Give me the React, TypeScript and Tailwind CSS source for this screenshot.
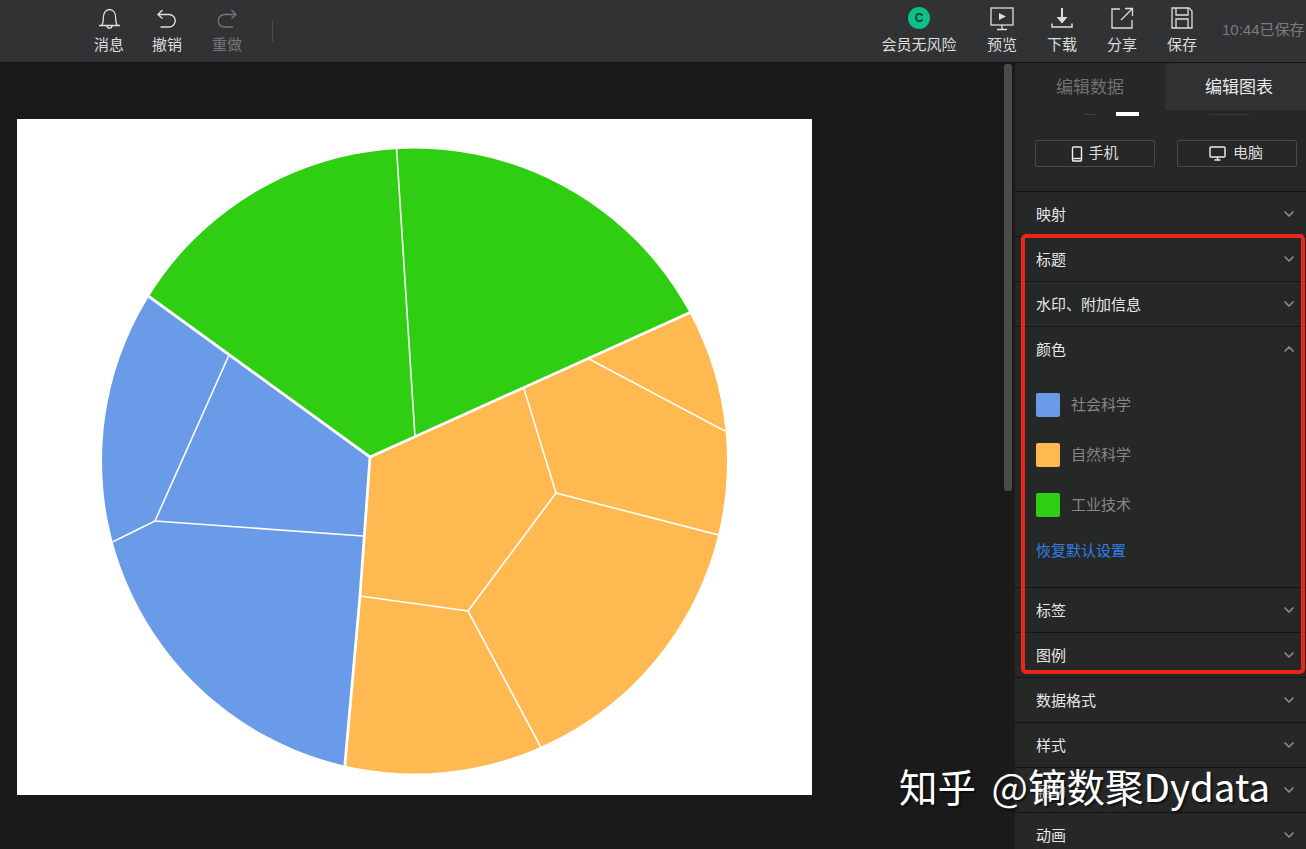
import { ChevronDown, ChevronUp } from "lucide-react";

const font = { fontFamily: '"Liberation Sans", "Noto Sans CJK SC", sans-serif' };

function Bell() {
  return (
    <svg width="24" height="24" viewBox="0 0 24 24" fill="none" stroke="currentColor" strokeWidth="1.3">
      <path d="M2 18.500h21M4.500 18.500c1.500-1.800 1.800-3.500 1.800-7.500C6.300 5.800 8.800 2.500 12.500 2.500s6.200 3.300 6.200 8.500c0 4 .3 5.700 1.800 7.500" />
      <path d="M10 18.500c0 1.700 1 2.700 2.500 2.700s2.500-1 2.500-2.700" />
    </svg>
  );
}

function Undo() {
  return (
    <svg width="24" height="24" viewBox="0 0 24 24" fill="none" stroke="currentColor" strokeWidth="1.4">
      <path d="M3 7.500h11a6.250 6.250 0 0 1 0 12.500H5.500" />
      <path d="M7.500 3 3 7.500l4.500 4" />
    </svg>
  );
}

function Redo() {
  return (
    <svg width="24" height="24" viewBox="0 0 24 24" fill="none" stroke="currentColor" strokeWidth="1.4">
      <path d="M21 7.500H9.500a6.250 6.250 0 0 0 0 12.500H18" />
      <path d="M16.500 3l4.500 4.500-4.500 4" />
    </svg>
  );
}

function Preview() {
  return (
    <svg width="24" height="24" viewBox="0 0 24 24" fill="none" stroke="currentColor" strokeWidth="1.3">
      <rect x="1" y="1" width="22" height="17" />
      <path d="M12 18v4M7 22.500h10" />
      <path d="M9 6l7 3.500-7 3.500z" fill="currentColor" stroke="none" />
    </svg>
  );
}

function Download() {
  return (
    <svg width="24" height="24" viewBox="0 0 24 24" fill="none" stroke="currentColor" strokeWidth="1.5">
      <path d="M12 1v10" strokeWidth="2" />
      <path d="M6.500 10h11L12 16.500z" fill="currentColor" stroke="none" />
      <path d="M2 16.500v3.500h20v-3.500" />
    </svg>
  );
}

function Share() {
  return (
    <svg width="24" height="24" viewBox="0 0 24 24" fill="none" stroke="currentColor" strokeWidth="1.3">
      <path d="M10 2H2v19h20v-8" />
      <path d="M11 13 22 2M15 1.500h7.500V9" />
    </svg>
  );
}

function Save() {
  return (
    <svg width="24" height="24" viewBox="0 0 24 24" fill="none" stroke="currentColor" strokeWidth="1.3">
      <path d="M2 1h17l3 3v17H2z" />
      <path d="M6 1v7h12V1M6 21v-9h12v9" />
    </svg>
  );
}

function ToolItem({ icon, label, dim, className }: { icon: React.ReactNode; label: string; dim?: boolean; className: string }) {
  return (
    <div className={`flex flex-col items-center ${className} ${dim ? "text-[#757678]" : "text-[#dcdddd]"}`}>
      <div className="h-[24px] w-[24px]">{icon}</div>
      <span className="mt-[4px] text-[15px] leading-[20px]">{label}</span>
    </div>
  );
}

function Row({ label, open }: { label: string; open?: boolean }) {
  const Icon = open ? ChevronUp : ChevronDown;
  return (
    <div className={`flex h-[45px] items-center justify-between border-b pl-[21px] pr-[9px] text-[15px] text-[#e6e6e6] ${open ? "border-transparent" : "border-[#151515]"}`}>
      <span className="pt-[2px]">{label}</span>
      <Icon className="h-[16px] w-[16px] text-[#8b8c8d]" strokeWidth={2.5} />
    </div>
  );
}

function Legend({ color, label }: { color: string; label: string }) {
  return (
    <div className="flex h-[50px] items-center">
      <div className={`h-[24px] w-[24px] rounded-[2px] ${color}`} />
      <span className="ml-[11px] text-[15px] text-[#868687]">{label}</span>
    </div>
  );
}

function Chart() {
  return (
    <svg className="block h-[676px] w-[795px] bg-white" viewBox="17 119 795 676">
      <defs>
        <clipPath id="disc">
          <circle cx="414.500" cy="461" r="312.500" />
        </clipPath>
      </defs>
      <g clipPath="url(#disc)" strokeLinecap="round">
        <polygon points="370,457 37,215 37,-100 1010,-100 1010,169" fill="#2fce12" />
        <polygon points="370,457 37,215 37,900 333,900 360,596" fill="#6a9be8" />
        <polygon points="370,457 1010,169 1010,900 333,900 360,596" fill="#ffb950" />
        <g stroke="#ffffff" strokeWidth="1.600" fill="none">
          <path d="M396 140 415 437" />
          <path d="M229 355 155 521M155 521 100 548M155 521 363 536" />
          <path d="M524 389 556 493M589 359 740 439M556 493 730 538M556 493 468 611M468 611 360 596M468 611 545 755" />
        </g>
        <g stroke="#ffffff" strokeWidth="2.800" fill="none">
          <path d="M370 457 140 290M370 457 700 308M370 457 360 596 344 775" />
        </g>
      </g>
    </svg>
  );
}

export default function App() {
  return (
    <div className="relative flex h-[849px] w-[1306px] flex-col overflow-hidden bg-[#1a1a1a]" style={font}>
      <header className="flex h-[63px] shrink-0 items-start border-b border-[#141414] bg-[#313234] pt-[7px]">
        <ToolItem icon={<Bell />} label="消息" className="ml-[94px] w-[30px]" />
        <ToolItem icon={<Undo />} label="撤销" className="ml-[28px] w-[30px]" />
        <ToolItem icon={<Redo />} label="重做" dim className="ml-[30px] w-[30px]" />
        <div className="ml-[30px] mt-[13px] h-[22px] w-px bg-[#4a4b4d]" />
        <div className="ml-[608px] flex w-[76px] flex-col items-center text-[#dcdddd]">
          <div className="h-[24px]">
            <div className="flex h-[22px] w-[22px] items-center justify-center rounded-full bg-[#0dbf86] text-[12px] font-bold text-[#1c3a30]">C</div>
          </div>
          <span className="mt-[4px] whitespace-nowrap text-[15px] leading-[20px]">会员无风险</span>
        </div>
        <ToolItem icon={<Preview />} label="预览" className="ml-[30px] w-[30px]" />
        <ToolItem icon={<Download />} label="下载" className="ml-[30px] w-[30px]" />
        <ToolItem icon={<Share />} label="分享" className="ml-[30px] w-[30px]" />
        <ToolItem icon={<Save />} label="保存" className="ml-[30px] w-[30px]" />
        <span className="ml-[25px] mt-[13px] whitespace-nowrap text-[15px] leading-[20px] text-[#7a7b7c]">10:44已保存</span>
      </header>

      <div className="flex min-h-0 flex-1">
        <main className="w-[1004px] shrink-0 pl-[17px] pt-[56px]">
          <Chart />
        </main>
        <div className="mt-[1px] h-[427px] w-[8px] shrink-0 rounded-[3px] bg-[#4a4b4c]" />
        <div className="w-[3px] shrink-0" />
        <aside className="w-[291px] shrink-0 overflow-hidden bg-[#262727]">
          <div className="flex h-[47px]">
            <div className="flex w-[150px] items-center justify-center pt-[2px] text-[17px] text-[#707172]">编辑数据</div>
            <div className="flex flex-1 items-center justify-center rounded-tl-[6px] bg-[#303133] pl-[7px] pt-[2px] text-[17px] text-[#e8e8e8]">编辑图表</div>
          </div>
          <div className="flex h-[82px] flex-col border-b border-[#151515]">
            <div className="mt-[2px] flex h-[4px] items-center pl-[70px]">
              <div className="h-px w-[10px] bg-[#454647]" />
              <div className="ml-[21px] h-[4px] w-[23px] bg-white" />
              <div className="ml-[70px] h-px w-[40px] bg-[#33384f]" />
            </div>
            <div className="mt-[24px] flex justify-between pl-[20px] pr-[9px]">
              <div className="flex h-[27px] w-[120px] items-center justify-center gap-[5px] rounded-[2px] border border-[#48494a] text-[15px] text-[#dcdddd]">
                <svg width="12" height="16" viewBox="0 0 12 16" fill="none" stroke="#f0f0f0" strokeWidth="1.400">
                  <rect x="1.500" y="1" width="9" height="14" rx="1" />
                  <path d="M1.500 12.500h9" />
                </svg>
                手机
              </div>
              <div className="flex h-[27px] w-[120px] items-center justify-center gap-[7px] rounded-[2px] border border-[#48494a] pr-[2px] text-[15px] text-[#dcdddd]">
                <svg width="17" height="15" viewBox="0 0 17 15" fill="none" stroke="#f0f0f0" strokeWidth="1.400">
                  <rect x="1" y="1" width="15" height="10" rx="1" />
                  <path d="M8.500 11v3M5.500 14h6" />
                </svg>
                电脑
              </div>
            </div>
          </div>
          <Row label="映射" />
          <Row label="标题" />
          <Row label="水印、附加信息" />
          <Row label="颜色" open />
          <div className="h-[216px] border-b border-[#151515] pl-[21px] pt-[8px]">
            <Legend color="bg-[#6a9be8]" label="社会科学" />
            <Legend color="bg-[#ffb950]" label="自然科学" />
            <Legend color="bg-[#2fce12]" label="工业技术" />
            <div className="mt-[10px] text-[15px] text-[#2f80e8]">恢复默认设置</div>
          </div>
          <Row label="标签" />
          <Row label="图例" />
          <Row label="数据格式" />
          <Row label="样式" />
          <Row label="辅助" />
          <Row label="动画" />
        </aside>
      </div>

      <div className="absolute left-[1021px] top-[234px] h-[440px] w-[284px] rounded-[5px] border-[4px] border-[#e8261c]" />
      <div className="absolute left-[899px] top-[760px] whitespace-nowrap text-[38.5px] leading-[50px] text-white [font-family:'Noto_Sans_CJK_SC',sans-serif] [text-shadow:2px_2px_2px_rgba(0,0,0,0.55)] [word-spacing:7px]">
        知乎 @镝数聚Dydata
      </div>
    </div>
  );
}
